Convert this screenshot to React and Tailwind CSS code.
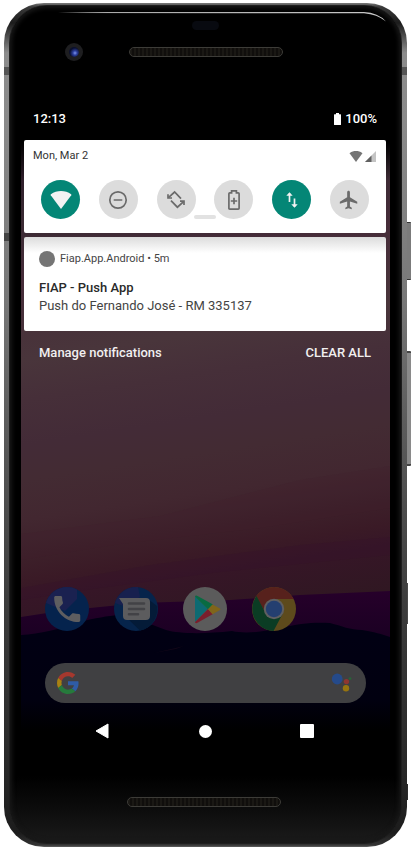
import React from "react";

function Wallpaper() {
  return (
    <svg
      className="absolute inset-0 h-full w-full"
      viewBox="21 105 369 640"
      preserveAspectRatio="none"
      aria-hidden="true"
    >
      <defs>
        <linearGradient id="sky" gradientUnits="userSpaceOnUse" x1="150" y1="150" x2="225" y2="640">
          <stop offset="0" stopColor="#2c1c29" />
          <stop offset="0.1" stopColor="#3a2a33" />
          <stop offset="0.22" stopColor="#462c39" />
          <stop offset="0.38" stopColor="#49353b" />
          <stop offset="0.46" stopColor="#462f39" />
          <stop offset="0.55" stopColor="#432b37" />
          <stop offset="0.62" stopColor="#432b33" />
          <stop offset="0.7" stopColor="#422730" />
          <stop offset="0.77" stopColor="#3d202a" />
          <stop offset="0.82" stopColor="#3a1a26" />
          <stop offset="0.86" stopColor="#361627" />
          <stop offset="0.95" stopColor="#301722" />
        </linearGradient>
        <linearGradient id="fade" x1="0" y1="0" x2="0" y2="1">
          <stop offset="0" stopColor="#000000" />
          <stop offset="0.5" stopColor="#000000" />
          <stop offset="1" stopColor="#000000" stopOpacity="0" />
        </linearGradient>
        <linearGradient id="haze" x1="0" y1="0" x2="0" y2="1">
          <stop offset="0" stopColor="#26002a" />
          <stop offset="1" stopColor="#15001f" />
        </linearGradient>
        <linearGradient id="land" x1="0" y1="0" x2="0" y2="1">
          <stop offset="0" stopColor="#010014" />
          <stop offset="0.65" stopColor="#010010" />
          <stop offset="0.9" stopColor="#000000" />
        </linearGradient>
      </defs>
      <rect x="21" y="105" width="369" height="640" fill="url(#sky)" />
      <rect x="21" y="105" width="369" height="75" fill="url(#fade)" />
      <path d="M21 534 L160 516 L300 480 L390 466 V508 L260 528 L120 544 L21 560 Z" fill="#421c2b" opacity="0.2" />
      <path d="M21 588 L150 565 L300 545 L390 537 V555 L220 572 L100 588 L21 600 Z" fill="#350f2b" opacity="0.3" />
      <path d="M21 617 L60 611 L140 603 L230 600 L300 595 L390 591 V660 H21 Z" fill="url(#haze)" />
      <path
        d="M21 635 C40 634 60 629 80 622 C95 618 108 616 118 615 C132 617 148 623 166 630 C180 634 205 634 232 631 C245 634 262 632 280 628 C300 623 315 622 330 623 C342 626 350 630 362 630 C374 632 382 634 390 637 V745 H21 Z"
        fill="url(#land)"
      />
      <path d="M154 653 L184 646 L176 649 Z" fill="#120618" />
    </svg>
  );
}

function Grille() {
  return (
    <div className="h-[10px] w-[154px] rounded-full border border-[#3d3c38] bg-[repeating-linear-gradient(90deg,#1a1814_0px,#1a1814_2px,#100e0c_2px,#100e0c_4px)]" />
  );
}

function WifiIcon({ className }) {
  return (
    <svg className={className} viewBox="0 0 24 20" fill="currentColor" aria-hidden="true">
      <path d="M12 20 L0.6 4.6 Q0.2 4 0.8 3.5 C4 1.1 8 0 12 0 C16 0 20 1.1 23.2 3.5 Q23.8 4 23.4 4.6 Z" />
    </svg>
  );
}

const glyphs = {
  wifi: <WifiIcon className="h-[18px] w-[22px]" />,
  dnd: (
    <svg className="size-5" viewBox="0 0 20 20" fill="none" stroke="currentColor" strokeWidth="1.7" aria-hidden="true">
      <circle cx="10" cy="10" r="8.2" />
      <path d="M5.7 10h8.6" />
    </svg>
  ),
  rotate: (
    <svg className="size-5" viewBox="-10 -10 20 20" fill="none" stroke="currentColor" strokeWidth="1.7" aria-hidden="true">
      <path d="M-7.6 -2.4 L-1.4 -8 L5 -1.4 M-5 0.6 L1.4 7.2 L7.6 1.6" />
      <path d="M-8 -5.8 V-2 H-4 M8 5 V1.2 H4" />
    </svg>
  ),
  battery: (
    <svg className="h-5 w-3" viewBox="0 0 12 20" fill="none" stroke="currentColor" strokeWidth="1.7" aria-hidden="true">
      <path d="M3.6 2.9 V0.9 H8.4 V2.9 H10.2 Q11.1 2.9 11.1 3.8 V18.2 Q11.1 19.1 10.2 19.1 H1.8 Q0.9 19.1 0.9 18.2 V3.8 Q0.9 2.9 1.8 2.9 Z" />
      <path d="M6 7.8 V14.2 M2.8 11 H9.2" />
    </svg>
  ),
  data: (
    <svg className="h-4 w-3" viewBox="0 0 12 16" fill="none" stroke="currentColor" strokeWidth="1.7" aria-hidden="true">
      <path d="M3.5 10 V1.6 M8.5 6.5 V14.4" />
      <path d="M0.3 3.8 H6.7 L3.5 0.2 Z M5.3 12.2 H11.7 L8.5 15.8 Z" fill="currentColor" stroke="none" />
    </svg>
  ),
  plane: (
    <svg className="size-[22px]" viewBox="0 0 24 24" fill="currentColor" aria-hidden="true">
      <path d="M21 16v-2l-8-5V3.5c0-.83-.67-1.5-1.5-1.5S10 2.67 10 3.5V9l-8 5v2l8-2.5V19l-2 1.5V22l3.5-1 3.5 1v-1.5L13 19v-5.5l8 2.5z" />
    </svg>
  ),
};

const tiles = [
  { id: "wifi", label: "Wi-Fi", on: true },
  { id: "dnd", label: "Do not disturb", on: false },
  { id: "rotate", label: "Auto-rotate", on: false },
  { id: "battery", label: "Battery saver", on: false },
  { id: "data", label: "Mobile data", on: true },
  { id: "plane", label: "Airplane mode", on: false },
];

function QuickSettings() {
  return (
    <section className="relative h-[93px] rounded-[2px] bg-white">
      <div className="flex h-8 items-center justify-between pr-[10px] pl-[9px]">
        <span className="text-[11px] leading-4 text-[#333333]">Mon, Mar 2</span>
        <span className="flex items-center gap-0.5 text-[#757575]">
          <WifiIcon className="h-[11px] w-[14px]" />
          <svg className="size-[11px]" viewBox="0 0 11 11" aria-hidden="true">
            <path d="M11 0 V11 H0 Z" fill="#c4c4c4" />
            <path d="M6.5 4.5 V11 H0 Z" fill="#606060" />
          </svg>
        </span>
      </div>
      <div className="absolute top-[75px] left-1/2 h-1 w-[22px] -translate-x-1/2 rounded-full bg-[#e2e2e2]" />
      <div className="relative flex justify-between px-[17px] pt-2">
        {tiles.map((tile) => (
          <button
            key={tile.id}
            type="button"
            aria-label={tile.label}
            aria-pressed={tile.on}
            className={
              tile.on
                ? "flex size-[39px] items-center justify-center rounded-full bg-[#048676] text-[#f2f2f2]"
                : "flex size-[39px] items-center justify-center rounded-full bg-[#dcdcdc] text-[#6b6b6b]"
            }
          >
            {glyphs[tile.id]}
          </button>
        ))}
      </div>
    </section>
  );
}

function Notification() {
  return (
    <article className="mt-1 h-[94px] rounded-[2px] bg-linear-to-b from-[#dcdcdc] to-white to-[16px] px-[15px] pt-[14px] text-[#2a2a2a]">
      <div className="flex items-center gap-[5px]">
        <span className="size-4 rounded-full bg-[#757575]" />
        <span className="text-[11px] leading-4 text-[#444444]">Fiap.App.Android • 5m</span>
      </div>
      <h2 className="mt-3 text-[13px] leading-[18px] font-medium">FIAP - Push App</h2>
      <p className="text-[13px] leading-[18px] text-[#444444]">Push do Fernando José - RM 335137</p>
    </article>
  );
}

function PhoneApp() {
  return (
    <svg className="size-full" viewBox="0 0 44 44" aria-hidden="true">
      <circle cx="22" cy="22" r="22" fill="#05234d" />
      <path d="M22 0 A22 22 0 0 0 1 16 L20 24 L32 12 V2.4 A22 22 0 0 0 22 0 Z" fill="#1a2150" />
      <g transform="translate(4.8 4.6) scale(1.45)">
        <path
          fill="#5e5e60"
          d="M6.62 10.79c1.44 2.83 3.76 5.14 6.59 6.59l2.2-2.2c.27-.27.67-.36 1.02-.24 1.12.37 2.33.57 3.57.57.55 0 1 .45 1 1V20c0 .55-.45 1-1 1-9.39 0-17-7.61-17-17 0-.55.45-1 1-1h3.5c.55 0 1 .45 1 1 0 1.25.2 2.45.57 3.57.11.35.03.74-.25 1.02l-2.2 2.2z"
        />
      </g>
    </svg>
  );
}

function MessagesApp() {
  return (
    <svg className="size-full" viewBox="0 0 44 44" aria-hidden="true">
      <circle cx="22" cy="22" r="22" fill="#06244b" />
      <path d="M24 0.1 A22 22 0 0 0 1 16 L12 20 L26 10 Z" fill="#17204e" />
      <path d="M34 12 L43 19 A22 22 0 0 1 26 43.6 L14 32 Z" fill="#041b38" />
      <path d="M5 11 H32 Q36 11 36 15 V29 Q36 33 32 33 H13 Q9 33 9 29 V17 Z" fill="#5c5c5e" />
      <path d="M15 16.5 H30 M15 22 H30 M15 27.2 H24" stroke="#424246" strokeWidth="2.6" strokeLinecap="round" />
    </svg>
  );
}

function PlayApp() {
  return (
    <svg className="size-full" viewBox="0 0 44 44" aria-hidden="true">
      <circle cx="22" cy="22" r="22" fill="#5b5b5b" />
      <path d="M12 9.5 V35 L25 22 Z" fill="#0d6a72" />
      <path d="M12 9.5 Q12.5 8 14.5 9 L30 17.6 L25 22.3 Z" fill="#086b42" />
      <path d="M12 35 Q12.5 37 14.5 35.8 L30 27 L25 22 Z" fill="#7a1f2c" />
      <path d="M29.5 17.4 L37 21.4 Q38 22.3 37 23 L29.5 27.2 L25 22.3 Z" fill="#80651a" />
    </svg>
  );
}

function ChromeApp() {
  return (
    <svg className="size-full" viewBox="0 0 44 44" aria-hidden="true">
      <circle cx="22" cy="22" r="22" fill="#5d4a1c" />
      <path d="M4 9.5 A22 22 0 0 1 41.6 12 H22 L12.5 24 Z" fill="#57211c" />
      <path d="M4.5 9 A22 22 0 0 0 21.5 44 L30.5 27 L14 27 Z" fill="#0b3c24" />
      <circle cx="22" cy="22" r="10.2" fill="#5f5f61" />
      <circle cx="22" cy="22" r="8.2" fill="#243f70" />
    </svg>
  );
}

const dock = [
  { label: "Phone", Icon: PhoneApp },
  { label: "Messages", Icon: MessagesApp },
  { label: "Play Store", Icon: PlayApp },
  { label: "Chrome", Icon: ChromeApp },
];

function SearchBar() {
  return (
    <div className="mx-6 mt-8 flex h-10 items-center rounded-full bg-[#404042] pr-[14px] pl-3">
      <svg className="size-[22px]" viewBox="0 0 48 48" aria-hidden="true">
        <path fill="#a5382e" d="M24 9.5c3.54 0 6.71 1.22 9.21 3.6l6.85-6.85C35.9 2.38 30.47 0 24 0 14.62 0 6.51 5.38 2.56 13.22l7.98 6.19C12.43 13.72 17.74 9.5 24 9.5z" />
        <path fill="#2f5ca6" d="M46.98 24.55c0-1.57-.15-3.09-.38-4.55H24v9.02h12.94c-.58 2.96-2.26 5.48-4.78 7.18l7.73 6c4.51-4.18 7.09-10.36 7.09-17.65z" />
        <path fill="#a88112" d="M10.53 28.59c-.48-1.45-.76-2.99-.76-4.59s.27-3.14.76-4.59l-7.98-6.19C.92 16.46 0 20.12 0 24c0 3.88.92 7.54 2.56 10.78l7.97-6.19z" />
        <path fill="#267a3c" d="M24 48c6.48 0 11.93-2.13 15.89-5.81l-7.73-6c-2.15 1.45-4.92 2.3-8.16 2.3-6.26 0-11.57-4.22-13.47-9.91l-7.98 6.19C6.51 42.62 14.62 48 24 48z" />
      </svg>
      <input type="search" aria-label="Search" className="min-w-0 flex-1 bg-transparent px-3 text-[13px] text-[#a0a0a0] outline-none" />
      <button type="button" aria-label="Assistant">
        <svg className="size-[22px]" viewBox="0 0 22 22" aria-hidden="true">
          <circle cx="7.2" cy="7" r="5.4" fill="#254a8a" />
          <circle cx="16.4" cy="9.6" r="2.7" fill="#8f3630" />
          <circle cx="16" cy="16.3" r="3.2" fill="#97740f" />
          <circle cx="20" cy="6.6" r="1.4" fill="#276438" />
        </svg>
      </button>
    </div>
  );
}

function NavBar() {
  return (
    <nav className="mt-[18px] flex h-5 items-center justify-between pr-[76px] pl-[73px] text-white">
      <button type="button" aria-label="Back">
        <svg className="h-4 w-4" viewBox="0 0 16 16" aria-hidden="true">
          <path d="M14 1 V15 L2 8 Z" fill="currentColor" stroke="currentColor" strokeLinejoin="round" />
        </svg>
      </button>
      <button type="button" aria-label="Home" className="size-[13px] rounded-full bg-white" />
      <button type="button" aria-label="Recents" className="size-[14px] rounded-[1px] bg-white" />
    </nav>
  );
}

function Screen() {
  return (
    <div className="relative mx-[11px] h-[640px]">
      <Wallpaper />
      <div className="relative">
        <div className="flex h-[35px] items-start justify-between pt-[5px] pr-[13px] pl-3 text-[13px] leading-[18px] font-medium text-white">
          <span>12:13</span>
          <span className="flex items-center gap-1">
            <svg className="h-3 w-[7px]" viewBox="0 0 7 12" fill="currentColor" aria-hidden="true">
              <path d="M2 1.2 V0 H5 V1.2 H6.5 Q7 1.2 7 1.8 V11.4 Q7 12 6.4 12 H0.6 Q0 12 0 11.4 V1.8 Q0 1.2 0.5 1.2 Z" />
            </svg>
            100%
          </span>
        </div>
        <div className="mr-1 ml-[3px]">
          <QuickSettings />
          <Notification />
          <div className="flex justify-between px-[15px] pt-[13px] text-[13px] leading-[18px] font-medium text-[#f1eff0]">
            <button type="button">Manage notifications</button>
            <button type="button">CLEAR ALL</button>
          </div>
        </div>
        <div className="mt-[225px] flex justify-between pr-[94px] pl-6">
          {dock.map(({ label, Icon }) => (
            <button key={label} type="button" aria-label={label} className="size-11">
              <Icon />
            </button>
          ))}
        </div>
        <SearchBar />
        <NavBar />
      </div>
    </div>
  );
}

export default function App() {
  return (
    <main className="min-h-screen bg-white pt-[3px] pr-[7px] pb-2 pl-1 font-['Roboto',sans-serif]">
      <div className="relative">
        <div className="absolute top-[219px] -right-1 h-[58px] w-1 rounded-r-[1px] border-y border-[#333333] bg-[#7b7b7b]" />
        <div className="absolute top-[348px] -right-1 h-[115px] w-1 rounded-r-[1px] border-y-2 border-[#444444] bg-[#8a8a8a]" />
        <div className="absolute top-[580px] -right-px h-[41px] w-1 bg-[#4a4a4a]" />
        <div className="absolute top-[781px] -right-px h-4 w-1 bg-[#2c2c2c]" />
        <div className="relative overflow-hidden rounded-[40px] bg-[linear-gradient(180deg,#7a7a7a_0px,#3a3a3a_4px,#1c1c1c_20px,#8c8c8c_50px,#8a8a8a_120px,#777777_300px,#5c5c5c_420px,#3c3c3c_600px,#262626_780px,#1c1c1c_830px,#333333_842px,#777777_845px)] px-[5px] pt-0.5 pb-[3px]">
          <div className="absolute top-16 left-0 h-2 w-full bg-[#555555]" />
          <div className="absolute top-[230px] left-0 h-2 w-1.5 bg-[#444444]" />
          <div className="relative rounded-[38px] border border-[#1e1e1e] bg-[linear-gradient(180deg,#000000_0px,#000000_770px,#0b0b0b_800px,#1c1c1c_840px)] shadow-[inset_0_0_4px_2px_#181818]">
            <svg className="absolute top-1.5 right-3 left-12 h-3" width="332" viewBox="0 0 332 12" preserveAspectRatio="none" aria-hidden="true">
              <defs>
                <linearGradient id="shine">
                  <stop offset="0" stopColor="#ffffff" stopOpacity="0" />
                  <stop offset="0.15" stopColor="#aaaaaa" />
                  <stop offset="1" stopColor="#c8c8c8" />
                </linearGradient>
              </defs>
              <path d="M0 0 H306 Q320 0.5 328 9.5 Q319 2.4 306 1.3 L0 1.1 Z" fill="url(#shine)" />
            </svg>
            <div className="flex h-[99px] flex-col items-center pt-[15px]">
              <div className="h-[9px] w-[27px] rounded-full bg-[#080a10]" />
              <div className="mt-[13px] grid w-full grid-cols-[1fr_154px_1fr] items-center">
                <div className="pl-[55px]">
                  <div className="flex size-[18px] items-center justify-center rounded-full bg-[#1e1e20]">
                    <div className="size-[10px] rounded-full bg-[radial-gradient(circle_at_60%_60%,#7f96ee_0%,#2c3f9e_25%,#0a0f2c_60%)]" />
                  </div>
                </div>
                <Grille />
              </div>
            </div>
            <Screen />
            <div className="flex h-[98px] justify-center pt-[52px] pr-1">
              <Grille />
            </div>
          </div>
        </div>
      </div>
    </main>
  );
}
